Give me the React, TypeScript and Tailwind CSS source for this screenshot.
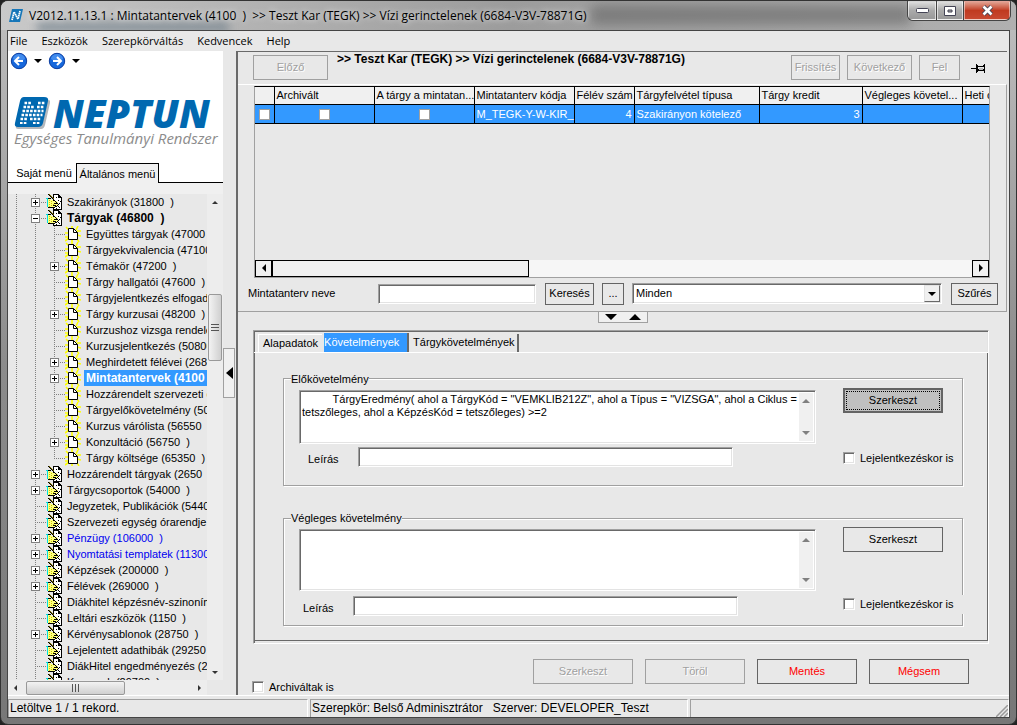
import type { ReactNode } from 'react';

interface TreeItem {
  label: string;
  child?: boolean;
  box?: '+' | '-';
  bold?: boolean;
  blue?: boolean;
  selected?: boolean;
  last?: boolean;
}

const treeItems: TreeItem[] = [
  { label: 'Szakirányok (31800  )', box: '+' },
  { label: 'Tárgyak (46800  )', box: '-', bold: true },
  { label: 'Együttes tárgyak (47000', child: true },
  { label: 'Tárgyekvivalencia (47100', child: true },
  { label: 'Témakör (47200  )', child: true, box: '+' },
  { label: 'Tárgy hallgatói (47600  )', child: true },
  { label: 'Tárgyjelentkezés elfogada', child: true },
  { label: 'Tárgy kurzusai (48200  )', child: true, box: '+' },
  { label: 'Kurzushoz vizsga rendelé', child: true },
  { label: 'Kurzusjelentkezés (50800', child: true },
  { label: 'Meghirdetett félévei (2684', child: true, box: '+' },
  { label: 'Mintatantervek (4100', child: true, box: '+', bold: true, selected: true },
  { label: 'Hozzárendelt szervezeti e', child: true },
  { label: 'Tárgyelőkövetelmény (500', child: true },
  { label: 'Kurzus várólista (56550  )', child: true },
  { label: 'Konzultáció (56750  )', child: true, box: '+' },
  { label: 'Tárgy költsége (65350  )', child: true, last: true },
  { label: 'Hozzárendelt tárgyak (2650  )', box: '+' },
  { label: 'Tárgycsoportok (54000  )', box: '+' },
  { label: 'Jegyzetek, Publikációk (5440' },
  { label: 'Szervezeti egység órarendje (' },
  { label: 'Pénzügy (106000  )', box: '+', blue: true },
  { label: 'Nyomtatási templatek (113000', box: '+', blue: true },
  { label: 'Képzések (200000  )', box: '+' },
  { label: 'Félévek (269000  )', box: '+' },
  { label: 'Diákhitel képzésnév-szinoním' },
  { label: 'Leltári eszközök (1150  )' },
  { label: 'Kérvénysablonok (28750  )', box: '+' },
  { label: 'Lejelentett adathibák (29250' },
  { label: 'DiákHitel engedményezés (29' },
  { label: 'Kurzusok (29700  )' },
];

const sunken =
  'border border-t-[#a0a0a0] border-l-[#a0a0a0] border-r-white border-b-white shadow-[inset_1px_1px_0_#696969,inset_-1px_-1px_0_#e3e3e3]';

function Guides({ item }: { item: TreeItem }) {
  const cx = item.child ? 46 : 27;
  const width = item.child ? 57 : 38;
  return (
    <svg width={width} height="16" className="shrink-0" shapeRendering="crispEdges" fill="none">
      <g stroke="#808080" strokeDasharray="1 1">
        <path d="M8.5 0V16M27.5 0V16" />
        {item.child && <path d={item.last ? 'M46.5 0V8' : 'M46.5 0V16'} />}
        <path d={`M${cx} 8.5H${width}`} />
      </g>
      {item.box && (
        <g>
          <rect x={cx - 3.5} y="4.5" width="8" height="8" fill="#fff" stroke="#808080" />
          <path d={`M${cx - 2} 8.5h5`} stroke="#000" />
          {item.box === '+' && <path d={`M${cx + 0.5} 6v5`} stroke="#000" />}
        </g>
      )}
    </svg>
  );
}

function PageIcon() {
  return (
    <svg width="16" height="16" viewBox="0 0 16 16" className="shrink-0">
      <path d="M1 1l3 3M7 0v3M13 0l-2 4M16 5h-4M0 7h3M0 15l4-3M7 16v-2M14 16l-2-3M12 9l4 1M0 11h3" stroke="#ff0" strokeWidth="1.600" />
      <path d="M3.500 2.500h5l4 4v7h-9z" fill="#fff" stroke="#000" />
      <path d="M8.500 2.500v4h4" fill="none" stroke="#000" />
    </svg>
  );
}

function WriteIcon() {
  return (
    <svg width="16" height="16" viewBox="0 0 16 16" className="shrink-0" shapeRendering="crispEdges">
      <path d="M7 0h6v1h1v1h1v1h1v13H7z" fill="#000" />
      <path d="M8 1h4v3h3v11H8z" fill="#fff" />
      <path d="M13 2h1v1h-1zM10 3h1v1h-1zM12 6h1v1h-1zM14 7h1v1h-1zM13 9h1v1h-1zM12 12h1v1h-1zM10 14h1v1h-1zM13 13h1v1h-1z" fill="#000" />
      <path d="M2 5h3v1h2v1h4v1h1v3h-1v1H9v1H2z" fill="#ffff80" />
      <path d="M3 6h1v1H3zM5 7h1v1H5zM3 8h1v1H3zM5 9h1v1H5zM3 10h1v1H3zM5 11h1v1H5zM3 12h1v1H3zM7 10h1v1H7z" fill="#c8c800" />
      <path d="M2 4h3v1H2zM2 13h7v1H2zM9 12h2v1H9zM11 11h1v1h-1zM7 11h3v1H7zM8 9h3v1H8z" fill="#000" />
      <path d="M0 4h2v9H1V5H0z" fill="#00e0e0" />
      <path d="M2 0h1v1H2zM3 1h1v1H3zM4 2h1v1H4zM5 3h1v1H5zM6 4h1v1H6zM7 5h1v1H7zM8 6h1v1H8zM9 7h1v1H9zM10 8h1v1h-1zM11 9h1v1h-1zM12 10h1v1h-1z" fill="#000" />
      <path d="M3 0h1v1H3zM4 1h1v1H4zM5 2h1v1H5zM6 3h1v1H6zM7 4h1v1H7z" fill="#807000" />
    </svg>
  );
}

function RoundArrow({ flip, label }: { flip?: boolean; label: string }) {
  return (
    <button type="button" aria-label={label}>
      <svg width="18" height="18" viewBox="0 0 18 18" className={flip ? '-scale-x-100' : ''}>
        <circle cx="9" cy="9" r="7.700" fill="#1768dc" stroke="#0a3ca0" />
        <path d="M3 7a6 5 0 0 1 12 0c-3 2-9 2-12 0" fill="#5da4f8" opacity=".6" />
        <path d="M9 5L5 9l4 4M5 9h8" fill="none" stroke="#fff" strokeWidth="2" />
      </svg>
    </button>
  );
}

function Triangle({ dir, gray }: { dir: 'up' | 'down' | 'left' | 'right'; gray?: boolean }) {
  const paths = {
    up: 'M0 6L4 2L8 6z',
    down: 'M0 2L4 6L8 2z',
    left: 'M6 0L2 4L6 8z',
    right: 'M2 0L6 4L2 8z',
  };
  return (
    <svg width="8" height="8" viewBox="0 0 8 8" className="shrink-0">
      <path d={paths[dir]} fill={gray ? '#808080' : '#000'} />
    </svg>
  );
}

function SmallTriangle({ dir }: { dir: 'up' | 'down' | 'left' | 'right' }) {
  const paths = {
    up: 'M1 6L4 3L7 6z',
    down: 'M1 3L4 6L7 3z',
    left: 'M5 1L2 4L5 7z',
    right: 'M3 1L6 4L3 7z',
  };
  return (
    <svg width="8" height="8" viewBox="0 0 8 8" className="shrink-0">
      <path d={paths[dir]} fill="#333" />
    </svg>
  );
}

function FlatButton({ children, className = '', disabled }: { children: ReactNode; className?: string; disabled?: boolean }) {
  return (
    <button
      type="button"
      disabled={disabled}
      className={`border text-center ${disabled ? 'border-[#a0a0a0] text-[#a0a0a0] [text-shadow:1px_1px_0_#fff]' : 'border-[#646464]'} ${className}`}
    >
      {children}
    </button>
  );
}

function Check({ label, className = '' }: { label: string; className?: string }) {
  return (
    <label className={`flex items-center gap-[5px] whitespace-nowrap ${className}`}>
      <input type="checkbox" className={`h-3 w-3 shrink-0 appearance-none bg-white ${sunken}`} />
      {label}
    </label>
  );
}

function GridCheck({ label }: { label: string }) {
  return (
    <input
      type="checkbox"
      aria-label={label}
      className="mx-auto block h-[11px] w-[11px] appearance-none border border-[#a0a0a0] bg-white"
    />
  );
}

function NeptunLogo() {
  return (
    <div className="pt-[26px] pl-1.5">
      <div className="flex items-center gap-[3px]">
        <svg width="36" height="34" viewBox="0 0 36 34">
          <path d="M9 4h25q3 0 2 3l-5 22q-1 4-4 4H4q-3 0-2-3z" fill="#b4b8bc" />
          <path d="M10 1h20q5 0 4 4l-5 22q-1 4-5 4H4q-4 0-3-4L6 5q1-4 4-4z" fill="#0068b0" />
          <g stroke="#fff" strokeWidth="2.600" strokeDasharray="2.600 1.200">
            <path d="M10.500 7h7M24 7h7M9.500 11h11M23 11h7M8.500 15h21M7.500 19h21M6.500 23h7M16 23h11" />
            <path d="M6 27h7M19 27h7" strokeWidth="2" />
          </g>
        </svg>
        <span className="font-['Open_Sans',sans-serif] text-[39px] leading-8 font-extrabold text-[#0068b0] italic">NEPTUN</span>
      </div>
      <div className="font-['Open_Sans',sans-serif] text-[15px] leading-4 whitespace-nowrap text-[#8c8c8c] italic">
        Egységes Tanulmányi Rendszer
      </div>
    </div>
  );
}

function TitleBar() {
  return (
    <header className="relative flex h-[29px] items-center overflow-hidden bg-linear-to-r from-[#c9c9c9] via-[#9c9c9c] to-[#b0b0b0] pl-2">
      <div className="absolute top-1 left-[590px] h-5 w-80 bg-[#666] opacity-60 blur-[6px]" />
      <div className="absolute top-5 left-9 h-3 w-48 bg-[#70808c] opacity-60 blur-[4px]" />
      <svg width="14" height="13" viewBox="0 0 14 13" className="relative">
        <path d="M3 0h11l-3 13H0z" fill="#1676b8" />
        <path d="M3 11l2-8 4 7 2-8" fill="none" stroke="#fff" strokeWidth="1.800" strokeDasharray="1.600 .5" />
      </svg>
      <h1 className="relative ml-1.5 font-['Open_Sans',sans-serif] text-[12px] whitespace-pre [text-shadow:0_0_6px_#fff]">
        {'V2012.11.13.1 : Mintatantervek (4100  )  >> Teszt Kar (TEGK) >> Vízi gerinctelenek (6684-V3V-78871G)'}
      </h1>
      <div className="relative mr-[5px] ml-auto flex h-5 gap-px self-start overflow-hidden rounded-b-md border border-t-0 border-[#444] bg-[#444]">
        <button type="button" aria-label="Kis méret" className="flex w-7 items-center justify-center border border-white/60 bg-linear-to-b from-[#ddd] via-[#aaa] via-50% to-[#999]">
          <svg width="13" height="5"><rect x=".5" y=".5" width="12" height="4" rx="1" fill="#fff" stroke="#445" /></svg>
        </button>
        <button type="button" aria-label="Teljes méret" className="flex w-[26px] items-center justify-center border border-white/60 bg-linear-to-b from-[#ddd] via-[#aaa] via-50% to-[#999]">
          <svg width="12" height="10"><path d="M.5.5h11v9H.5zM4 4v2h4V4z" fill="#fff" fillRule="evenodd" stroke="#445" /></svg>
        </button>
        <button type="button" aria-label="Bezárás" className="flex w-[46px] items-center justify-center border border-white/50 bg-linear-to-b from-[#e0a090] via-[#c03a20] via-50% to-[#c84830]">
          <svg width="13" height="11" viewBox="0 0 13 11">
            <path d="M2.500 1.500l8 8M10.500 1.500l-8 8" stroke="#445" strokeWidth="4.400" />
            <path d="M2.500 1.500l8 8M10.500 1.500l-8 8" stroke="#fff" strokeWidth="2.600" />
          </svg>
        </button>
      </div>
    </header>
  );
}

function Sidebar() {
  return (
    <aside className="flex w-[215px] shrink-0 flex-col">
      <div className="flex h-28 flex-col bg-white">
        <div className="flex items-center gap-1.5 px-0.5 pt-px">
          <RoundArrow label="Vissza" />
          <Triangle dir="down" />
          <RoundArrow flip label="Előre" />
          <Triangle dir="down" />
        </div>
        <NeptunLogo />
      </div>
      <div className="flex h-5 bg-white">
        <button type="button" className="w-[68px] border-b border-black pt-0.5 pl-1">Saját menü</button>
        <button type="button" className="w-[83px] border border-b-0 border-black bg-[#f0f0f0] pt-0.5">Általános menü</button>
        <div className="flex-1 border-b border-black" />
      </div>
      <div className="h-[11px] shrink-0 bg-[#f0f0f0]" />
      <div className="flex min-h-0 flex-1">
        <ul className="min-w-0 flex-1 overflow-hidden">
          {treeItems.map((item) => (
            <li key={item.label} className="flex h-4">
              <Guides item={item} />
              {item.child ? <PageIcon /> : <WriteIcon />}
              <span
                className={`ml-[3px] flex-1 pl-0.5 leading-4 whitespace-pre ${item.bold ? 'text-[12px] font-bold' : ''} ${item.blue ? 'text-[#0000f0]' : ''} ${item.selected ? 'bg-[#3399ff] text-white' : ''}`}
              >
                {item.label}
              </span>
            </li>
          ))}
        </ul>
        <div className="flex w-4 flex-col items-center bg-[#ededed] py-1">
          <SmallTriangle dir="up" />
          <div className="flex-[2]" />
          <div className="flex h-[67px] w-3.5 flex-col items-center justify-center gap-0.5 rounded-xs border border-[#999] bg-linear-to-r from-[#f3f3f3] to-[#d0d0d0]">
            <i className="h-px w-2 bg-[#555]" />
            <i className="h-px w-2 bg-[#555]" />
            <i className="h-px w-2 bg-[#555]" />
          </div>
          <div className="flex-[7]" />
          <SmallTriangle dir="down" />
        </div>
      </div>
      <div className="mr-4 flex h-[15px] shrink-0 items-center bg-[#ededed] px-1">
        <SmallTriangle dir="left" />
        <div className="ml-1.5 flex h-3.5 w-[99px] items-center justify-center gap-0.5 rounded-xs border border-[#999] bg-linear-to-b from-[#f3f3f3] to-[#d0d0d0]">
          <i className="h-2 w-px bg-[#555]" />
          <i className="h-2 w-px bg-[#555]" />
          <i className="h-2 w-px bg-[#555]" />
        </div>
        <div className="flex-1" />
        <SmallTriangle dir="right" />
      </div>
    </aside>
  );
}

function DataGrid() {
  const head = 'overflow-hidden whitespace-nowrap border border-t-0 border-black pl-0.5 text-left font-normal first:border-l-0';
  const cell = 'border border-black px-0.5 first:border-l-0';
  return (
    <div className="flex h-[192px] flex-col border border-[#a0a0a0] border-t-black">
      <div className="flex-1 overflow-hidden">
        <table className="w-[807px] table-fixed border-collapse">
          <colgroup>
            <col className="w-[19px]" />
            <col className="w-[100px]" />
            <col className="w-[100px]" />
            <col className="w-[100px]" />
            <col className="w-[60px]" />
            <col className="w-[125px]" />
            <col className="w-[103px]" />
            <col className="w-[100px]" />
            <col className="w-[100px]" />
          </colgroup>
          <thead>
            <tr className="h-[18px] bg-[#f0f0f0]">
              <th className={head} />
              <th className={head}>Archivált</th>
              <th className={head}>A tárgy a mintatan...</th>
              <th className={head}>Mintatanterv kódja</th>
              <th className={head}>Félév szám</th>
              <th className={head}>Tárgyfelvétel típusa</th>
              <th className={head}>Tárgy kredit</th>
              <th className={head}>Végleges követel...</th>
              <th className={head}>Heti ó</th>
            </tr>
          </thead>
          <tbody>
            <tr className="h-[19px] bg-[#3399ff] text-white">
              <td className={cell}><GridCheck label="Kijelölés" /></td>
              <td className={cell}><GridCheck label="Archivált" /></td>
              <td className={cell}><GridCheck label="A tárgy a mintatanterven" /></td>
              <td className={`${cell} whitespace-nowrap`}>M_TEGK-Y-W-KIR_</td>
              <td className={`${cell} text-right`}>4</td>
              <td className={cell}>Szakirányon kötelező</td>
              <td className={`${cell} text-right`}>3</td>
              <td className={cell} />
              <td className={cell} />
            </tr>
          </tbody>
        </table>
      </div>
      <div className="flex h-[17px] bg-[#f6f6f6]">
        <button type="button" aria-label="Balra" className="flex w-[17px] items-center justify-center border border-black bg-[#f0f0f0]">
          <Triangle dir="left" />
        </button>
        <div className="w-[35%] border border-black bg-[#f0f0f0]" />
        <div className="flex-1" />
        <button type="button" aria-label="Jobbra" className="flex w-[17px] items-center justify-center border border-black bg-[#f0f0f0]">
          <Triangle dir="right" />
        </button>
      </div>
    </div>
  );
}

function FilterRow() {
  return (
    <div className="flex items-center pt-[5px] pr-2 pb-1.5 pl-2.5">
      <label htmlFor="curriculum" className="w-[130px] shrink-0">Mintatanterv neve</label>
      <input id="curriculum" className={`h-5 w-[158px] bg-white px-1 ${sunken}`} />
      <FlatButton className="ml-[9px] h-[22px] w-[49px]">Keresés</FlatButton>
      <FlatButton className="ml-2 h-[22px] w-[22px]">...</FlatButton>
      <div className="relative ml-2 flex-1">
        <select aria-label="Szűrő" className={`block h-[21px] w-full appearance-none bg-white pl-[3px] ${sunken}`}>
          <option>Minden</option>
        </select>
        <span className="pointer-events-none absolute top-0.5 right-0.5 flex h-[17px] w-4 items-center justify-center border border-t-[#e3e3e3] border-r-[#696969] border-b-[#696969] border-l-[#e3e3e3] bg-[#f0f0f0]">
          <Triangle dir="down" />
        </span>
      </div>
      <FlatButton className="ml-[9px] h-[22px] w-[47px]">Szűrés</FlatButton>
    </div>
  );
}

interface RequirementProps {
  title: string;
  id: string;
  text?: string;
  areaClass: string;
  rowClass: string;
  buttonClass: string;
  checkClass?: string;
}

function Requirement({ title, id, text, areaClass, rowClass, buttonClass, checkClass }: RequirementProps) {
  return (
    <fieldset className="min-w-0 border border-[#a0a0a0] px-[15px] pb-2 shadow-[1px_1px_0_#fff,inset_1px_1px_0_#fff]">
      <legend className="-ml-2 bg-[#e8e8e8] leading-4">{title}</legend>
      <div className="grid grid-cols-[1fr_100px] items-start gap-x-[27px] pr-1">
        <div className={`mt-[3px] flex bg-white p-0.5 ${areaClass} ${sunken}`}>
          <textarea
            aria-label={title}
            defaultValue={text}
            className="min-w-0 flex-1 resize-none overflow-hidden leading-[13px] outline-none"
          />
          <div className="flex w-3.5 flex-col items-center justify-between bg-[#f0f0f0] py-1">
            <Triangle dir="up" gray />
            <Triangle dir="down" gray />
          </div>
        </div>
        <FlatButton className={`mt-px ${buttonClass}`}>Szerkeszt</FlatButton>
        <div className={`flex items-center ${rowClass}`}>
          <label htmlFor={id} className="w-[50px] shrink-0 pt-1">Leírás</label>
          <input id={id} className={`h-5 min-w-0 flex-1 bg-white px-1 ${sunken}`} />
        </div>
        <Check label="Lejelentkezéskor is" className={checkClass} />
      </div>
    </fieldset>
  );
}

const requirementText =
  '          TárgyEredmény( ahol a TárgyKód = "VEMKLIB212Z", ahol a Típus = "VIZSGA", ahol a Ciklus =\ntetszőleges, ahol a KépzésKód = tetszőleges) >=2';

function MainPanel() {
  return (
    <main className="mr-0.5 flex min-w-0 flex-1 flex-col border-t border-l-2 border-[#696969]">
      <div className="flex h-8 items-start">
        <FlatButton disabled className="mt-[3px] ml-[15px] h-[25px] w-[75px]">Előző</FlatButton>
        <h2 className="ml-[9px] flex-1 text-[12px] leading-[15px] font-bold whitespace-nowrap">
          {'>> Teszt Kar (TEGK) >> Vízi gerinctelenek (6684-V3V-78871G)'}
        </h2>
        <div className="mt-[3px] flex items-center gap-[7px] pr-[21px]">
          <FlatButton disabled className="h-[25px] w-[49px]">Frissítés</FlatButton>
          <FlatButton disabled className="h-[25px] w-[65px]">Következő</FlatButton>
          <FlatButton disabled className="h-[25px] w-[41px]">Fel</FlatButton>
          <button type="button" aria-label="Rögzítés" className="ml-1">
            <svg width="15" height="12" viewBox="0 0 15 12" shapeRendering="crispEdges" fill="none" stroke="#000">
              <path d="M0 6.500h5M5.500 2v9M13.500 2v9M6.500 3v7M12.500 3v2M7 4.500h5M7 8.500h6M7 7.500h6" />
              <path d="M8 5.500h4v2H8z" fill="#bbb" stroke="none" />
            </svg>
          </button>
        </div>
      </div>
      <section className="border-t border-r border-b border-t-white border-r-[#a0a0a0] border-b-[#a0a0a0]">
        <div className="pt-px pr-4 pl-4">
          <DataGrid />
        </div>
        <FilterRow />
      </section>
      <button type="button" aria-label="Panel mérete" className="mx-auto flex h-[11px] w-[50px] items-center justify-around border border-t-0 border-[#a0a0a0] bg-[#f0f0f0]">
        <svg width="36" height="6"><path d="M0 0h12L6 6zM24 6h12L30 0z" /></svg>
      </button>

      <section className={`mt-[7px] mr-[18px] ml-[15px] pb-0.5 ${sunken}`}>
        <div role="tablist" className="flex h-[22px] items-end gap-0.5 border-b border-white px-1">
          <button type="button" role="tab" className="h-[18px] border-t border-l border-white px-1">Alapadatok</button>
          <button type="button" role="tab" aria-selected="true" className="h-[19px] w-[85px] border-r-2 border-[#696969] bg-[#3399ff] text-left text-white">Követelmények</button>
          <button type="button" role="tab" className="h-[18px] border-r-2 border-[#696969] px-0.5">Tárgykövetelmények</button>
        </div>
        <div className="border-r border-b border-[#696969] pt-[18px] pr-6 pb-3.5 pl-[29px]">
          <Requirement
            title="Előkövetelmény"
            id="desc-pre"
            text={requirementText}
            areaClass="h-[54px]"
            rowClass="mt-[3px] mb-[10px] pr-[83px] pl-[9px]"
            buttonClass="h-[25px] border-2 bg-[#c0c0c0] outline-1 -outline-offset-4 outline-dotted"
            checkClass="mt-1.5"
          />
          <div className="h-6" />
          <Requirement
            title="Végleges követelmény"
            id="desc-final"
            areaClass="h-[62px]"
            rowClass="mt-[5px] pr-[78px] pl-1"
            buttonClass="h-[25px]"
            checkClass="mt-1 -mr-6 bg-[#e8e8e8] py-px"
          />
        </div>
      </section>

      <div className="flex items-start justify-between pt-[15px] pr-[38px] pl-3.5">
        <Check label="Archiváltak is" className="mt-5" />
        <div className="flex gap-3">
          <FlatButton disabled className="h-[25px] w-[100px]">Szerkeszt</FlatButton>
          <FlatButton disabled className="h-[25px] w-[100px]">Töröl</FlatButton>
          <FlatButton className="h-[25px] w-[100px] text-[#ff0000]">Mentés</FlatButton>
          <FlatButton className="h-[25px] w-[100px] text-[#ff0000]">Mégsem</FlatButton>
        </div>
      </div>
    </main>
  );
}

export default function App() {
  const pane = 'border-t border-l border-r border-t-[#a0a0a0] border-l-[#a0a0a0] border-r-white pl-px';
  return (
    <div className="h-screen overflow-hidden bg-[#222] font-['Liberation_Sans',Arial,sans-serif] text-[11px] text-black">
      <div className="flex h-full flex-col overflow-hidden rounded-lg border border-[#333] bg-linear-to-b from-[#c0c0c0] via-[#8c8c8c] to-[#777]">
        <TitleBar />
        <div className="mx-1.5 mb-1.5 flex min-h-0 flex-1 flex-col border border-[#444] bg-[#e8e8e8]">
          <nav className="flex h-5 shrink-0 items-center gap-3.5 pl-0.5 font-['Open_Sans',sans-serif] text-[11px]">
            <button type="button">File</button>
            <button type="button">Eszközök</button>
            <button type="button">Szerepkörváltás</button>
            <button type="button">Kedvencek</button>
            <button type="button">Help</button>
          </nav>
          <div className="flex min-h-0 flex-1">
            <Sidebar />
            <div className="flex w-[13px] shrink-0 items-center">
              <button type="button" aria-label="Menü elrejtése" className="flex h-[50px] w-3 items-center justify-center border border-[#a0a0a0] bg-[#f0f0f0]">
                <svg width="8" height="12"><path d="M8 0v12L1 6z" /></svg>
              </button>
            </div>
            <MainPanel />
          </div>
          <footer className="flex shrink-0 gap-0.5 border-t border-white pt-[3px] text-[12px] leading-[17px]">
            <div className={`w-[300px] ${pane}`}>Letöltve 1 / 1 rekord.</div>
            <div className={`w-[378px] whitespace-pre ${pane}`}>{'Szerepkör: Belső Adminisztrátor   Szerver: DEVELOPER_Teszt'}</div>
            <div className={`flex flex-1 items-end justify-end ${pane}`}>
              <svg width="12" height="12" stroke="#999" strokeWidth="1.500"><path d="M0 12L12 0M4 12L12 4M8 12L12 8" /></svg>
            </div>
          </footer>
        </div>
      </div>
    </div>
  );
}
